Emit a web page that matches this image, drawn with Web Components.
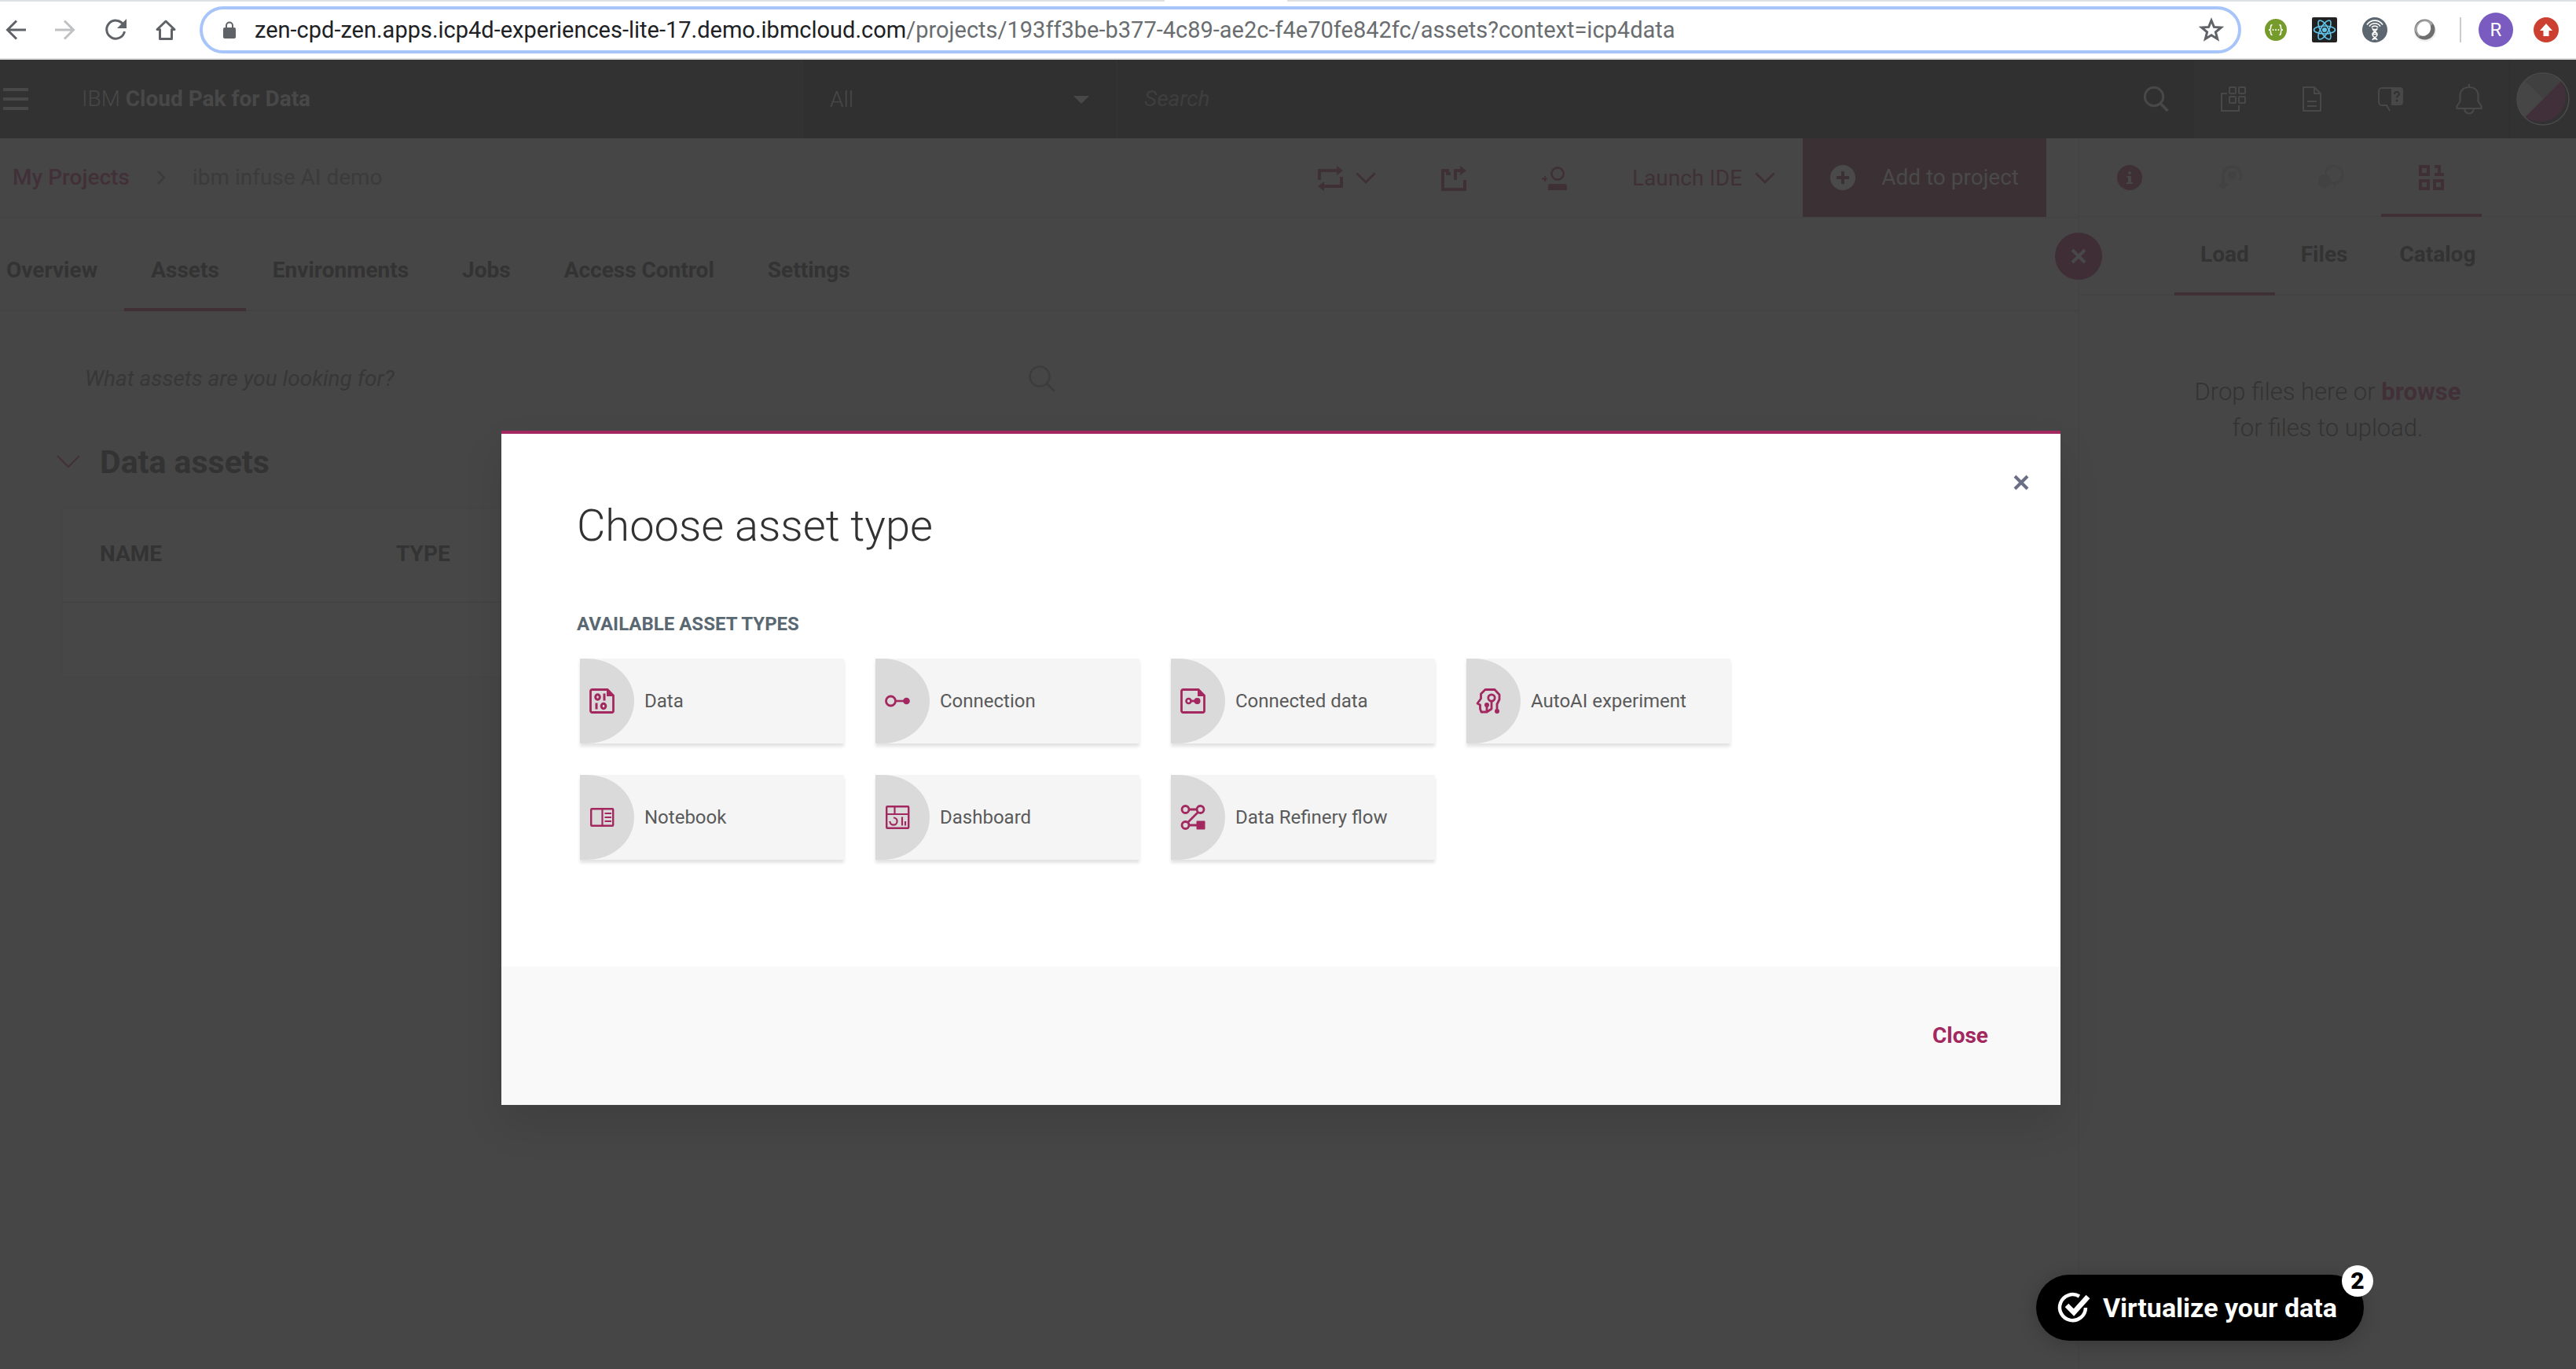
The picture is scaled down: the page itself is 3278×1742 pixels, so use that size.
<!DOCTYPE html>
<html lang="en">
<head>
<meta charset="utf-8">
<title>IBM Cloud Pak for Data</title>
<style>
  html, body { margin: 0; height: 100%; }
  body {
    display: flex; flex-direction: column; min-height: 100vh; overflow: hidden;
    font: 28px/36px Roboto, "Liberation Sans", sans-serif;
    background: #464646; color: #333333;
    --accent: #a2285f; --accent-dim: #3f3036; --link-dim: #423038; --ink-dim: #333333; --line-dim: #444444;
  }
</style>
</head>
<body>
<browser-bar></browser-bar>
<app-header></app-header>
<project-page></project-page>
<asset-dialog heading="Choose asset type" label="Available asset types">
  <asset-card icon="data">Data</asset-card>
  <asset-card icon="connection">Connection</asset-card>
  <asset-card icon="connected">Connected data</asset-card>
  <asset-card icon="autoai">AutoAI experiment</asset-card>
  <asset-card icon="notebook">Notebook</asset-card>
  <asset-card icon="dashboard">Dashboard</asset-card>
  <asset-card icon="refinery">Data Refinery flow</asset-card>
</asset-dialog>
<guide-pill count="2">Virtualize your data</guide-pill>

<script>
const RESET = `
  *, *::before, *::after { box-sizing: border-box; }
  button, input, select { font: inherit; color: inherit; background: none; border: 0; padding: 0; margin: 0; border-radius: 0; outline: none; appearance: none; }
  a { color: inherit; text-decoration: none; }
  h1, h2, h3, p { margin: 0; font-size: inherit; }
`;
function define(name, render) {
  customElements.define(name, class extends HTMLElement {
    connectedCallback() {
      if (this.shadowRoot) return;
      const t = document.createElement('template');
      t.innerHTML = render(this);
      this.attachShadow({ mode: 'open' }).append(t.content.cloneNode(true));
    }
  });
}

// name: [width, height, drawing]
const ICONS = {
  back: [26, 26, '<path d="M26 13H3M14 1.500L2.500 13 14 24.500" fill="none" stroke="currentColor" stroke-width="3"/>'],
  forward: [26, 26, '<path d="M0 13h23M12 1.500L23.500 13 12 24.500" fill="none" stroke="currentColor" stroke-width="3"/>'],
  reload: [28, 28, '<path d="M24 7.500A11.500 11.500 0 1 0 25.500 16" fill="none" stroke="currentColor" stroke-width="3"/><path d="M28 0v12H16z" fill="currentColor"/>'],
  home: [26, 26, '<path d="M13 2L2 12.500h3.500V24.500h15V12.500H24z" fill="none" stroke="currentColor" stroke-width="3" stroke-linejoin="round"/>'],
  lock: [16, 22, '<path d="M4 9V5.500a4 4 0 0 1 8 0V9" fill="none" stroke="currentColor" stroke-width="2"/><rect y="8" width="16" height="14" rx="2" fill="currentColor"/>'],
  star: [30, 30, '<path d="M15 3l3.400 8.400 9 .6-7 5.800 2.300 8.700L15 21.700 7.300 26.500l2.300-8.700-7-5.800 9-.6z" fill="none" stroke="currentColor" stroke-width="3"/>'],
  braces: [28, 28, '<circle cx="14" cy="14" r="14" fill="#759c2b"/><path d="M9.500 7.500C7.500 7.500 7.500 9 7.500 11s0 3-2.500 3c2.500 0 2.500 1 2.500 3s0 3.500 2 3.500M18.500 7.500c2 0 2 1.500 2 3.500s0 3 2.500 3c-2.500 0-2.500 1-2.500 3s0 3.500-2 3.500" fill="none" stroke="#fff" stroke-width="1.600"/><g fill="#fff"><circle cx="10.500" cy="14" r="1"/><circle cx="14" cy="14" r="1"/><circle cx="17.500" cy="14" r="1"/></g>'],
  react: [32, 32, '<rect width="32" height="32" rx="2" fill="#222"/><g fill="none" stroke="#61c5ea" stroke-width="1.600"><ellipse cx="16" cy="16" rx="13.500" ry="5"/><ellipse cx="16" cy="16" rx="13.500" ry="5" transform="rotate(60 16 16)"/><ellipse cx="16" cy="16" rx="13.500" ry="5" transform="rotate(120 16 16)"/></g><circle cx="16" cy="16" r="3" fill="#61c5ea"/>'],
  dna: [32, 32, '<circle cx="16" cy="16" r="16" fill="#5c6670"/><g fill="none" stroke="#fff" stroke-width="1.600"><path d="M6 9.500a12 12 0 0 1 20 0M9 11.500a8.500 8.500 0 0 1 14 0M12 13a5 5 0 0 1 8 0"/><path d="M13 14c0 4 6 4 6 8s-5 3-6 7M19 14c0 4-6 4-6 8s5 3 6 7M13.500 15.500h5M13.500 21.500h5M14 27.500h4"/></g>'],
  ring: [32, 32, '<ellipse cx="16" cy="18" rx="14" ry="13" fill="#eee"/><circle cx="15.500" cy="15.500" r="13" fill="#6e6e6e"/><path d="M3 17A13 13 0 0 1 26 8L8 25z" fill="#a5a5a5"/><ellipse cx="14.500" cy="14.500" rx="8.500" ry="9.500" transform="rotate(28 14.500 14.500)" fill="#fff"/>'],
  update: [32, 32, '<circle cx="16" cy="16" r="16" fill="#cb4030"/><path d="M16 8l8 9h-4.500v7h-7v-7H8z" fill="#fff"/>'],
  menu: [32, 28, '<path d="M0 2h32M0 14h32M0 26h32" stroke="currentColor" stroke-width="4"/>'],
  caret: [20, 10, '<path d="M0 0h20L10 10z" fill="currentColor"/>'],
  search: [32, 32, '<circle cx="13" cy="13" r="11.700" fill="none" stroke="currentColor" stroke-width="3"/><path d="M21.500 22l9 9" stroke="currentColor" stroke-width="3.600"/>'],
  searchthin: [34, 34, '<circle cx="14" cy="14" r="12.500" fill="none" stroke="currentColor" stroke-width="2.500"/><path d="M23 23l10 10" stroke="currentColor" stroke-width="2.500"/>'],
  apps: [32, 32, '<g fill="none" stroke="currentColor" stroke-width="2"><rect x="11" y="1" width="8" height="8" rx="1"/><rect x="23" y="1" width="8" height="8" rx="1"/><rect x="11" y="13" width="8" height="8" rx="1"/><rect x="23" y="13" width="8" height="8" rx="1"/><path d="M8 9H1v22h22v-7"/></g>'],
  doc: [24, 32, '<g fill="none" stroke="currentColor" stroke-width="2" stroke-linejoin="round"><path d="M1 1h14l8 8v22H1zM15 1v8h8M6 19h12M6 25h12"/></g>'],
  help: [32, 32, '<path d="M18 2H5a4 4 0 0 0-4 4v14a4 4 0 0 0 4 4h6l4 7" fill="none" stroke="currentColor" stroke-width="2"/><path d="M17 1h11a4 4 0 0 1 4 4v15a4 4 0 0 1-4 4H17z" fill="currentColor"/><path d="M21 10c0-4 6-4 6-.5 0 2.500-3 2-3 5" fill="none" stroke="#323232" stroke-width="2.200"/><circle cx="24" cy="18" r="1.500" fill="#323232"/>'],
  bell: [34, 38, '<g fill="none" stroke="currentColor" stroke-width="2.200"><path d="M17 0v4M17 4C9 4 5.500 9 5.500 15v7L1.500 28v3h31v-3l-4-6v-7C28.500 9 25 4 17 4z"/><path d="M11.500 32a5.500 5.500 0 0 0 11 0"/></g>'],
  avatar: [68, 68, '<path d="M57 11A33 33 0 0 1 11 57z" fill="#412f3a"/><path d="M57 11L11 57a33 33 0 0 1 0-46z" fill="#464646"/><path d="M34 34L11 11a33 33 0 0 1 46 0z" fill="#404040"/><path d="M34 34L11 57a33 33 0 0 1 0-46z" fill="#464646"/><circle cx="34" cy="34" r="33" fill="none" stroke="#4a4a4a" stroke-width="1.500"/>'],
  next: [12, 18, '<path d="M2 1l8 8-8 8" fill="none" stroke="currentColor" stroke-width="2.500"/>'],
  down: [26, 16, '<path d="M1.500 1.500L13 13 24.500 1.500" fill="none" stroke="currentColor" stroke-width="3"/>'],
  downthin: [30, 18, '<path d="M1 1l14 14L29 1" fill="none" stroke="currentColor" stroke-width="2"/>'],
  loop: [32, 32, '<path d="M2 18V6h22M30 14v12H8" fill="none" stroke="currentColor" stroke-width="4"/><path d="M24 0l8 6-8 6zM8 20l-8 6 8 6z" fill="currentColor"/>'],
  export: [32, 32, '<path d="M12 10H8V6H2v24h28V18M18 18V6h8" fill="none" stroke="currentColor" stroke-width="4"/><path d="M24 0l8 6-8 6z" fill="currentColor"/>'],
  adduser: [32, 32, '<circle cx="20" cy="10" r="7.600" fill="none" stroke="currentColor" stroke-width="2.600"/><path d="M8 31v-5a3 3 0 0 1 3-3h18a3 3 0 0 1 3 3v5z" fill="currentColor"/><path d="M4 13v7M0 16.500h7" stroke="currentColor" stroke-width="2"/>'],
  plus: [32, 32, '<circle cx="16" cy="16" r="16" fill="currentColor"/><path d="M16 8v16M8 16h16" stroke="#3b3033" stroke-width="4"/>'],
  info: [32, 32, '<circle cx="16" cy="16" r="16" fill="currentColor"/><g fill="#464646"><circle cx="16" cy="10" r="2"/><path d="M12.500 14h5.500v8h2v2h-8v-2h2v-6h-1.500z"/></g>'],
  cycle: [32, 32, '<circle cx="18.500" cy="13" r="5" fill="currentColor"/><path d="M7 27V13a11.500 11.500 0 1 1 21 7" fill="none" stroke="currentColor" stroke-width="3.500"/><path d="M0 23l7 9 7-9z" fill="currentColor"/>'],
  chat: [32, 32, '<circle cx="20" cy="12" r="11" fill="none" stroke="currentColor" stroke-width="2.500"/><circle cx="8" cy="20" r="8" fill="currentColor"/><path d="M3 25l6 7 1-7zM19 31l1-8 6-1z" fill="currentColor"/>'],
  blocks: [32, 32, '<path d="M2 2h10v10H2zM2 20h10v10H2zM20 20h10v10H20zM20 2h6v10M20 12h12" fill="none" stroke="currentColor" stroke-width="4"/>'],
  cross: [20, 20, '<path d="M2 2l16 16M18 2L2 18" stroke="currentColor" stroke-width="4"/>'],
  data: [32, 32, '<path d="M3.500 1.500H23L30.500 9v19.500a2 2 0 0 1-2 2h-25a2 2 0 0 1-2-2v-25a2 2 0 0 1 2-2z" fill="none" stroke="currentColor" stroke-width="2.800"/><path d="M22 1l9 9h-9z" fill="currentColor"/><g fill="none" stroke="currentColor" stroke-width="3"><ellipse cx="10.500" cy="11" rx="2.800" ry="3.200"/><path d="M19 6.500v9M9 18.500v8"/><ellipse cx="18" cy="22.500" rx="2.800" ry="3.200"/></g>'],
  connection: [32, 32, '<circle cx="7.500" cy="16" r="6" fill="none" stroke="currentColor" stroke-width="2.800"/><path d="M13 16h13" stroke="currentColor" stroke-width="2.600"/><circle cx="27.500" cy="16" r="4.300" fill="currentColor"/>'],
  connected: [32, 32, '<path d="M3.500 1.500H23L30.500 9v19.500a2 2 0 0 1-2 2h-25a2 2 0 0 1-2-2v-25a2 2 0 0 1 2-2z" fill="none" stroke="currentColor" stroke-width="2.800"/><path d="M22 1l9 9h-9z" fill="currentColor"/><circle cx="10.500" cy="16" r="3" fill="none" stroke="currentColor" stroke-width="2.600"/><path d="M13 16h8" stroke="currentColor" stroke-width="2.800"/><circle cx="21.500" cy="16" r="4" fill="currentColor"/>'],
  autoai: [32, 32, '<g fill="none" stroke="currentColor" stroke-width="2.800" stroke-linejoin="round"><path d="M27 28V20l3-6V8l-6-6.500H12L6.500 7v6L2 19l3.500 2v5l1.500 4h7l6-4v-9"/><circle cx="20" cy="12" r="4.200"/><path d="M14 29v-8"/></g><circle cx="14" cy="21" r="3" fill="currentColor"/><circle cx="27" cy="29" r="3" fill="currentColor"/>'],
  notebook: [32, 32, '<rect x="2.200" y="5.200" width="28" height="21.600" rx="1" fill="none" stroke="currentColor" stroke-width="2.400"/><path d="M16.500 5v22M19.500 11H28M19.500 16H28M19.500 21H28" fill="none" stroke="currentColor" stroke-width="2.200"/>'],
  dashboard: [32, 32, '<rect x="2.200" y="2.200" width="28" height="27.600" rx="1" fill="none" stroke="currentColor" stroke-width="2.400"/><path d="M2 12h28M12.500 2v10M22 15.500v11M26 21v5.500M11 16.500a4.600 4.600 0 1 1-4.600 4.600" fill="none" stroke="currentColor" stroke-width="2.200"/>'],
  refinery: [32, 32, '<g fill="none" stroke="currentColor" stroke-width="2.800"><circle cx="6.500" cy="6" r="4.500"/><circle cx="25.500" cy="6" r="4.500"/><circle cx="6.500" cy="26" r="4.500"/><path d="M11 6h10M22.500 9.500l-13 13M11 26h10"/></g><rect x="20.500" y="20.500" width="11" height="11" rx="1" fill="currentColor"/>'],
  check: [42, 40, '<path d="M27 5.500A16.500 16.500 0 1 0 35 20" fill="none" stroke="#fff" stroke-width="4.500"/><path d="M11 17l9 9L38 6" fill="none" stroke="#fff" stroke-width="6.500"/>']
};
define('ui-icon', el => {
  const [w, h, art] = ICONS[el.getAttribute('name')];
  return `<style>:host{display:inline-flex;flex:none} svg{display:block;overflow:visible}</style>
  <svg width="${w}" height="${h}" viewBox="0 0 ${w} ${h}" aria-hidden="true">${art}</svg>`;
});

define('browser-bar', () => `<style>${RESET}
  :host { display: block; flex: none; background: #fff; border-bottom: 2px solid #dadddb; }
  .tabs { display: flex; gap: 156px; height: 2px; }
  .tabs i { background: #dee1e4; flex: 1482 1 0; }
  .tabs i + i { flex-grow: 1640; }
  .bar { display: flex; align-items: center; height: 72px; color: #5f6368; padding: 0 22px 0 7px; }
  nav { display: flex; align-items: center; gap: 37px; margin-right: 30px; }
  nav button { display: flex; }
  nav .off { color: #bfc1c3; }
  .url { flex: 1; display: flex; align-items: center; height: 60px; border: 4px solid #a8c5fa; border-radius: 30px; padding: 0 19px 0 26px; gap: 24px; }
  .text { flex: 1; font: 29px/36px Roboto, sans-serif; color: #6a6d70; white-space: nowrap; }
  .text b { font-weight: 400; color: #202124; }
  .ext { display: flex; align-items: center; gap: 32px; padding-left: 30px; }
  .sep { width: 2px; height: 32px; background: #ccc; margin-left: -4px; margin-right: -10px; }
  .me { width: 44px; height: 44px; border-radius: 50%; background: #7a5bbf; color: #fff; font-size: 24px; line-height: 44px; text-align: center; margin-right: -6px; }
</style>
<div class="tabs"><i></i><i></i></div>
<div class="bar">
  <nav>
    <button aria-label="Back"><ui-icon name="back"></ui-icon></button>
    <button class="off" aria-label="Forward"><ui-icon name="forward"></ui-icon></button>
    <button aria-label="Reload"><ui-icon name="reload"></ui-icon></button>
    <button aria-label="Home"><ui-icon name="home"></ui-icon></button>
  </nav>
  <div class="url"><ui-icon name="lock"></ui-icon>
    <div class="text" role="textbox" aria-label="Address"><b>zen-cpd-zen.apps.icp4d-experiences-lite-17.demo.ibmcloud.com</b>/projects/193ff3be-b377-4c89-ae2c-f4e70fe842fc/assets?context=icp4data</div>
    <ui-icon name="star"></ui-icon></div>
  <div class="ext">
    <ui-icon name="braces"></ui-icon><ui-icon name="react"></ui-icon><ui-icon name="dna"></ui-icon><ui-icon name="ring"></ui-icon>
    <div class="sep"></div><button class="me">R</button><ui-icon name="update"></ui-icon>
  </div>
</div>`);

define('app-header', () => `<style>${RESET}
  :host { display: flex; flex: none; height: 100px; background: #323232; color: #484848; align-items: stretch; }
  .brand { display: flex; align-items: center; gap: 68px; padding-left: 4px; width: 1020px; }
  .brand button { display: flex; }
  .brand a { font-weight: 300; } .brand b { font-weight: 700; }
  .find { flex: 1; display: flex; align-items: center; background: #303030; border-left: 2px solid #333333; }
  .scope { display: flex; align-items: center; width: 400px; height: 100%; padding: 2px 34px 0; border-right: 2px solid #333333; font-weight: 300; }
  .scope select { flex: 1; }
  .find input { flex: 1; padding-left: 34px; }
  .find input::placeholder { color: #3e3e3e; font-style: italic; opacity: 1; }
  .cell { display: flex; align-items: center; justify-content: center; width: 100px; }
  .find .cell { width: 96px; }
  .last { width: 86px; border-left: 2px solid #303030; }
</style>
<div class="brand"><button aria-label="Menu"><ui-icon name="menu"></ui-icon></button><a href="#">IBM <b>Cloud Pak for Data</b></a></div>
<div class="find">
  <label class="scope"><select aria-label="Search scope"><option>All</option></select><ui-icon name="caret"></ui-icon></label>
  <input aria-label="Search" placeholder="Search">
  <button class="cell" aria-label="Run search"><ui-icon name="search"></ui-icon></button>
</div>
<button class="cell" aria-label="Applications"><ui-icon name="apps"></ui-icon></button>
<button class="cell" aria-label="Documents"><ui-icon name="doc"></ui-icon></button>
<button class="cell" aria-label="Help"><ui-icon name="help"></ui-icon></button>
<button class="cell" aria-label="Notifications"><ui-icon name="bell"></ui-icon></button>
<button class="cell last" aria-label="Profile"><ui-icon name="avatar"></ui-icon></button>`);

define('project-page', () => `<style>${RESET}
  :host { display: grid; flex: 1; grid-template-columns: 1fr 634px; color: var(--ink-dim); }
  .side { border-left: 2px solid var(--line-dim); position: relative; }
</style>
<main><project-bar></project-bar>
  <tab-strip kind="main" current="Assets" items="Overview,Assets,Environments,Jobs,Access Control,Settings"></tab-strip>
  <asset-list></asset-list></main>
<aside class="side"><side-panel></side-panel></aside>`);

define('project-bar', () => `<style>${RESET}
  :host { display: flex; height: 102px; padding: 0 40px 2px 16px; box-shadow: inset 0 -2px var(--line-dim); }
  .crumbs { flex: 1; display: flex; align-items: center; gap: 34px; color: #3b3b3b; }
  .crumbs a { color: var(--link-dim); font-weight: 500; }
  .tool { display: flex; align-items: center; justify-content: center; width: 128px; padding-top: 2px; color: var(--accent-dim); }
  .wide { width: auto; gap: 16px; padding: 2px 35px 0; }
  .add { display: flex; align-items: center; gap: 33px; padding: 0 35px; background: #3b3033; color: #4a4a4a; }
</style>
<nav class="crumbs"><a href="#">My Projects</a><ui-icon name="next"></ui-icon><span>ibm infuse AI demo</span></nav>
<button class="tool wide" aria-label="Sync"><ui-icon name="loop"></ui-icon><ui-icon name="down"></ui-icon></button>
<button class="tool" aria-label="Export"><ui-icon name="export"></ui-icon></button>
<button class="tool" aria-label="Add user"><ui-icon name="adduser"></ui-icon></button>
<button class="tool wide">Launch IDE<ui-icon name="down"></ui-icon></button>
<button class="add"><ui-icon name="plus"></ui-icon>Add to project</button>`);

define('tab-strip', el => {
  const cur = el.getAttribute('current');
  const tabs = el.getAttribute('items').split(',').map(t => `<a href="#" role="tab" aria-selected="${t === cur}">${t}</a>`).join('');
  return `<style>${RESET}
  :host { display: block; box-shadow: inset 0 -2px #434343; }
  div { display: flex; font-weight: 700; color: var(--ink-dim); }
  a { border-bottom: 4px solid transparent; padding: 48px 34px 30px; }
  a[aria-selected=true] { border-color: var(--accent-dim); }
  :host([kind=main]) a:first-child { padding-left: 8px; }
  :host([kind=side]) div { padding-left: 121px; }
  :host([kind=side]) a { padding: 30px 33px; }
</style><div role="tablist">${tabs}</div>`;
});

define('asset-list', () => `<style>${RESET}
  :host { display: block; padding: 56px 84px 0 78px; }
  .find { display: flex; align-items: center; height: 60px; width: 1265px; padding-left: 30px; color: #3c3c3c; }
  .find input { flex: 1; }
  .find input::placeholder { color: #373737; font-style: italic; opacity: 1; }
  .find button { display: flex; }
  h2 { display: flex; align-items: center; gap: 25px; margin: 52px 0 0 -6px; font-size: 41px; line-height: 48px; font-weight: 700; }
  h2 ui-icon { color: var(--link-dim); }
  table { width: 100%; margin-top: 34px; border-collapse: collapse; border: 2px solid #454545; background: #474747; table-layout: fixed; }
  th { text-align: left; height: 119px; padding: 0 0 4px 47px; font-weight: 700; border-bottom: 2px solid #434343; }
  th:first-child { width: 378px; }
  td { height: 95px; }
</style>
<div class="find"><input aria-label="Find assets" placeholder="What assets are you looking for?"><button aria-label="Find"><ui-icon name="searchthin"></ui-icon></button></div>
<h2><ui-icon name="downthin"></ui-icon>Data assets</h2>
<table><thead><tr><th>NAME</th><th>TYPE</th></tr></thead><tbody><tr><td></td><td></td></tr></tbody></table>`);

define('side-panel', () => `<style>${RESET}
  :host { display: block; }
  .tools { display: flex; height: 100px; box-shadow: inset 0 -2px var(--line-dim); color: var(--accent-dim); }
  .tools button { display: flex; align-items: center; justify-content: center; width: 128px; }
  .tools .off { color: #424242; }
  .tools .on { box-shadow: inset 0 -4px var(--accent-dim); background: #454545; }
  .hide { position: absolute; left: -31px; top: 120px; width: 60px; height: 60px; border-radius: 50%; background: #402e37; color: #484848; display: flex; align-items: center; justify-content: center; }
  .drop { padding: 100px 0 98px; text-align: center; font-size: 31px; line-height: 46px; font-weight: 300; color: #333333; }
  .drop a { color: var(--link-dim); font-weight: 700; }
</style>
<div class="tools">
  <button aria-label="Information"><ui-icon name="info"></ui-icon></button>
  <button class="off" aria-label="History"><ui-icon name="cycle"></ui-icon></button>
  <button class="off" aria-label="Comments"><ui-icon name="chat"></ui-icon></button>
  <button class="on" aria-label="Data"><ui-icon name="blocks"></ui-icon></button>
</div>
<tab-strip kind="side" current="Load" items="Load,Files,Catalog"></tab-strip>
<p class="drop">Drop files here or <a href="#">browse</a><br>for files to upload.</p>
<button class="hide" aria-label="Close panel"><ui-icon name="cross"></ui-icon></button>`);

define('asset-card', el => `<style>${RESET}
  :host { display: block; }
  button { display: flex; align-items: center; gap: 13px; width: 100%; height: 108px; background: #f5f5f5; box-shadow: 0 4px 4px #e2e2e2; font-size: 24px; line-height: 32px; color: #5a5a5a; }
  span { display: flex; align-items: center; width: 69px; height: 108px; padding-left: 12px; border-radius: 0 60px 60px 0 / 0 54px 54px 0; background: #dadada; color: var(--accent); }
</style><button><span><ui-icon name="${el.getAttribute('icon')}"></ui-icon></span><slot></slot></button>`);

define('asset-dialog', el => `<style>${RESET}
  :host { position: absolute; inset: 76px 18px 0 0; display: flex; justify-content: center; align-items: flex-start; padding-top: 472px; }
  section { width: 61%; max-width: 1984px; background: #fff; border-top: 4px solid var(--accent); box-shadow: 0 24px 48px rgba(0,0,0,.1); }
  header { display: flex; justify-content: space-between; align-items: flex-start; padding: 52px 40px 0 96px; }
  h1 { font-size: 56px; line-height: 72px; font-weight: 300; margin-top: 29px; color: #323232; }
  header button { display: flex; color: #6b6f85; }
  h2 { font-size: 24px; line-height: 32px; font-weight: 700; color: #5a6872; text-transform: uppercase; margin: 73px 96px 28px; }
  .grid { display: grid; grid-template-columns: repeat(4, 336px); gap: 40px; padding: 0 100px 136px; }
  footer { display: flex; align-items: center; justify-content: flex-end; height: 176px; padding-right: 92px; background: #f9f9f9; }
  footer button { color: var(--accent); font-weight: 700; }
</style>
<section role="dialog" aria-labelledby="t">
  <header><h1 id="t">${el.getAttribute('heading')}</h1><button aria-label="Dismiss"><ui-icon name="cross"></ui-icon></button></header>
  <h2>${el.getAttribute('label')}</h2>
  <div class="grid"><slot></slot></div>
  <footer><button>Close</button></footer>
</section>`);

define('guide-pill', el => `<style>${RESET}
  :host { position: absolute; right: 270px; bottom: 36px; }
  button { display: flex; align-items: center; gap: 15px; height: 84px; padding: 0 34px 0 28px; border-radius: 42px; background: #000; color: #fff; font-size: 34px; line-height: 40px; font-weight: 700; box-shadow: 0 4px 24px rgba(0,0,0,.2); }
  b { position: absolute; top: -12px; right: -12px; width: 40px; height: 40px; border-radius: 50%; background: #fff; color: #000; font-size: 30px; line-height: 40px; text-align: center; }
</style><button><ui-icon name="check"></ui-icon><slot></slot><b>${el.getAttribute('count')}</b></button>`);
</script>
</body>
</html>
